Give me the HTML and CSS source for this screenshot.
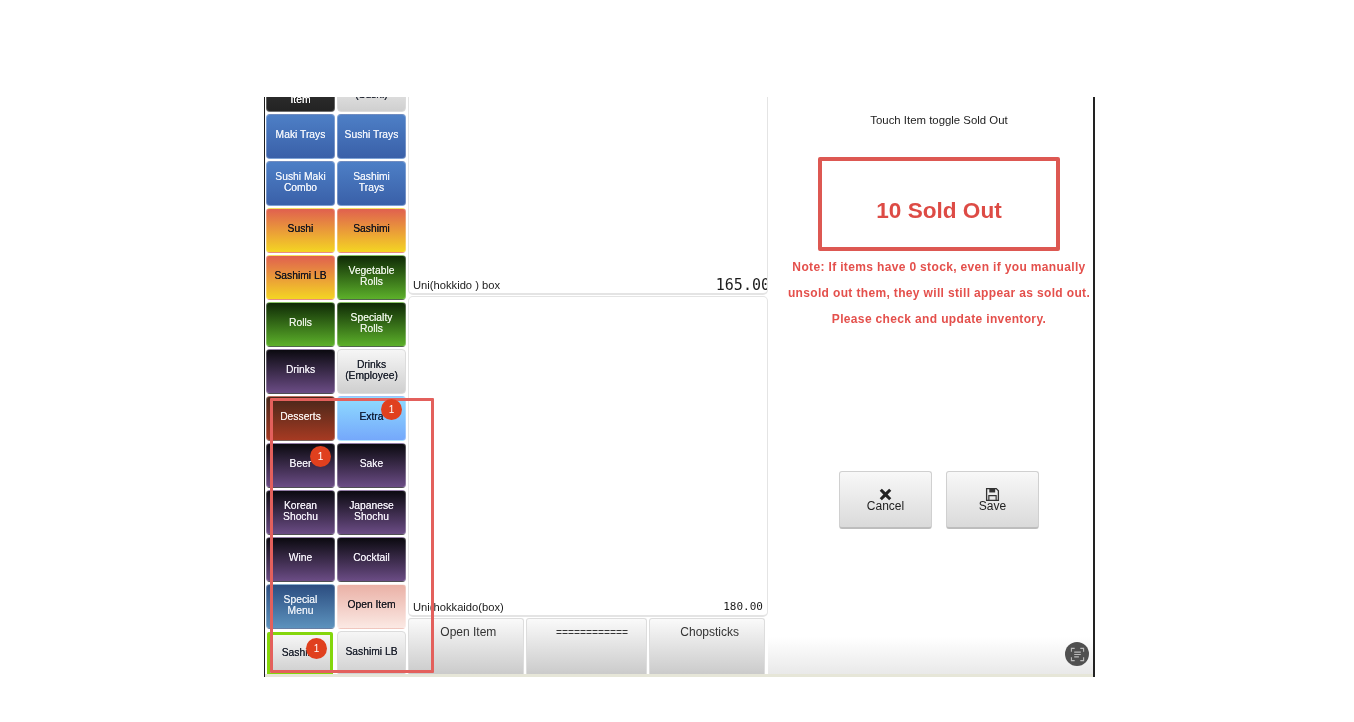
FILE: index.html
```html
<!DOCTYPE html>
<html lang="en">
<head>
<meta charset="utf-8">
<title>Sold Out</title>
<link rel="stylesheet" href="styles.css">
</head>
<body>
<div class="frame">
  <div class="screen">
    <nav class="menu">
      <div class="tile dark-grey">Item</div><div class="tile light cut">(Sushi)</div>
      <div class="tile blue">Maki Trays</div><div class="tile blue">Sushi Trays</div>
      <div class="tile blue">Sushi Maki<br>Combo</div><div class="tile blue">Sashimi<br>Trays</div>
      <div class="tile sunset">Sushi</div><div class="tile sunset">Sashimi</div>
      <div class="tile sunset">Sashimi LB</div><div class="tile green">Vegetable<br>Rolls</div>
      <div class="tile green">Rolls</div><div class="tile green">Specialty<br>Rolls</div>
      <div class="tile purple">Drinks</div><div class="tile light">Drinks<br>(Employee)</div>
      <div class="tile maroon">Desserts</div><div class="tile sky">Extra</div>
      <div class="tile purple">Beer</div><div class="tile purple">Sake</div>
      <div class="tile purple">Korean<br>Shochu</div><div class="tile purple">Japanese<br>Shochu</div>
      <div class="tile purple">Wine</div><div class="tile purple">Cocktail</div>
      <div class="tile navy">Special<br>Menu</div><div class="tile pink">Open Item</div>
      <div class="tile light selected">Sashimi</div><div class="tile light">Sashimi LB</div>
    </nav>
    <main class="items">
      <div class="card card-top"><span>Uni(hokkido ) box</span><span class="price price-big">165.00</span></div>
      <div class="card card-main"><span>Uni(hokkaido(box)</span><span class="price">180.00</span></div>
      <div class="shortcuts">
        <div class="shortcut">Open Item</div>
        <div class="shortcut shortcut-rule">============</div>
        <div class="shortcut">Chopsticks</div>
      </div>
    </main>
    <aside class="panel">
      <p class="hint">Touch Item toggle Sold Out</p>
      <div class="count">10 Sold Out</div>
      <p class="note">Note: If items have 0 stock, even if you manually<br>unsold out them, they will still appear as sold out.<br>Please check and update inventory.</p>
      <div class="actions">
        <button class="action" type="button">
          <svg class="action-icon" viewBox="0 0 14 14"><path d="M3.6 1.6 7 5l3.4-3.4 2 2L9 7l3.4 3.4-2 2L7 9l-3.4 3.4-2-2L5 7 1.6 3.6z" fill="#222"/></svg>
          Cancel
        </button>
        <button class="action" type="button">
          <svg class="action-icon" viewBox="0 0 14 14"><path d="M1.5 1.5h9l2 2v9h-11z" fill="none" stroke="#333" stroke-width="1.2"/><path d="M4 1.5h5.5v3.6H4z" fill="#333"/><path d="M3.6 12.5V8h6.8v4.5" fill="none" stroke="#333" stroke-width="1.1"/></svg>
          Save
        </button>
      </div>
    </aside>
    <div class="strip"></div>
    <div class="scan">
      <svg viewBox="0 0 16 16" class="scan-icon"><path d="M1.5 5V1.5H5M11 1.5h3.5V5M14.5 11v3.5H11M5 14.5H1.5V11" fill="none" stroke="#bbb" stroke-width="1.2"/><path d="M4.5 5.5h7M4.5 8h7M4.5 10.5h5" fill="none" stroke="#bbb" stroke-width="1.2"/></svg>
    </div>
  </div>
  <div class="annotation"></div>
  <span class="badge badge-extra">1</span>
  <span class="badge badge-beer">1</span>
  <span class="badge badge-sashimi">1</span>
</div>
</body>
</html>
```
FILE: styles.css
```css
* { box-sizing: border-box; }
html, body { margin: 0; background: #fff; }
body {
  height: 722px;
  padding: 97px 0 0 264px;
  overflow: hidden;
  font-family: "Liberation Sans", Arial, sans-serif;
}
.frame {
  position: relative;
  width: 831px;
  height: 580px;
  filter: blur(0.55px);
}
.screen {
  position: relative;
  display: flex;
  width: 100%;
  height: 100%;
  overflow: hidden;
  background: #fff;
  border-left: 1px solid #1c1c1c;
  border-right: 2px solid #222;
}

/* left category menu */
.menu {
  flex: none;
  width: 142px;
  height: 580px;
  margin-left: 1px;
  display: grid;
  grid-template-columns: 69px 69px;
  grid-auto-rows: 45px;
  column-gap: 2px;
  row-gap: 2px;
  align-content: end;
  padding-bottom: 1px;
  overflow: hidden;
}
.tile {
  display: flex;
  align-items: center;
  justify-content: center;
  padding-bottom: 2px;
  text-align: center;
  font-size: 10.3px;
  line-height: 10.5px;
  color: #fff;
  border-radius: 4px;
  border: 1px solid rgba(255, 255, 255, .28);
  text-shadow: 0 0 .6px currentColor;
}
.dark-grey { background: linear-gradient(#3a3a3a, #232323); align-items: flex-end; padding-bottom: 6px; }
.cut { align-items: flex-end; padding-bottom: 11px; }
.blue { background: linear-gradient(#4d7fc6, #3a60a8); color: #eef2fa; }
.sunset { background: linear-gradient(#e0604f, #f4d523); color: #14141f; }
.green { background: linear-gradient(#0f2a06, #5cb02a); color: #e8f0e2; }
.purple { background: linear-gradient(#0b0a10, #6b4c85); color: #f0edf5; }
.maroon { background: linear-gradient(#47271a, #a63a22); color: #f5eeea; }
.sky { background: linear-gradient(#8fdcff, #75a8fb); color: #12203a; }
.navy { background: linear-gradient(#2c4d80, #5c92bd); color: #e8eef6; }
.pink { background: linear-gradient(#eab1a6, #fbe9e4); color: #1d1d25; }
.light { background: linear-gradient(#f6f6f6, #cfcfcf); color: #1f2430; border-color: #dcdcdc; }
.selected { margin: 1px 2px 0 1px; border: 3px solid #84d60c; border-radius: 2px; }

/* centre items */
.items {
  flex: none;
  width: 360px;
  height: 580px;
  display: flex;
  flex-direction: column;
}
.card {
  display: flex;
  justify-content: space-between;
  align-items: flex-end;
  padding: 0 4px 1px;
  font-size: 11.2px;
  color: #1c1c1c;
  line-height: 14px;
  background: #fff;
  border: 2px solid #e4e4e4;
  border-width: 1px 1px 2px;
  border-radius: 5px;
  overflow: hidden;
  white-space: nowrap;
}
.card-top { height: 198px; border-top: 0; border-radius: 0 0 5px 5px; padding-right: 0; }
.card-main { height: 321px; margin-top: 1px; }
.price { font-family: "DejaVu Sans Mono", monospace; font-size: 11px; }
.price-big { font-size: 15px; line-height: 14px; margin-right: -3px; }
.shortcuts {
  display: flex;
  gap: 2px;
  width: 357px;
  height: 58px;
  margin-top: 1px;
}
.shortcut {
  flex: 1;
  padding: 6px 0 0 5px;
  text-align: center;
  font-size: 12px;
  line-height: 14px;
  color: #333;
  background: linear-gradient(#fafafa, #c9c9c9);
  border: 1px solid #ddd;
  border-bottom: 0;
  border-radius: 3px 3px 0 0;
}
.shortcut-rule { padding: 7px 0 0 11px; font-size: 10.3px; }

/* right panel */
.panel {
  flex: 1;
  min-width: 0;
  height: 577px;
  padding: 16px 0 0 17px;
  display: flex;
  flex-direction: column;
  align-items: center;
  background: linear-gradient(#fff 540px, #e9e9e9);
  white-space: nowrap;
}
.hint {
  margin: 0;
  font-size: 11.4px;
  line-height: 14px;
  color: #222;
}
.count {
  width: 242px;
  height: 94px;
  margin-top: 30px;
  padding-top: 14px;
  display: flex;
  align-items: center;
  justify-content: center;
  font-size: 22.6px;
  font-weight: 700;
  color: #dd4b45;
  border: 4px solid #dd5852;
  border-radius: 2px;
}
.note {
  margin: 3px 0 0;
  font-size: 12px;
  letter-spacing: .35px;
  font-weight: 700;
  line-height: 26px;
  text-align: center;
  color: #e4504c;
}
.actions {
  display: flex;
  gap: 14px;
  margin-top: 139px;
}
.action {
  width: 93px;
  height: 58px;
  padding: 15px 0 0;
  display: flex;
  flex-direction: column;
  align-items: center;
  font: 12px/12px "Liberation Sans", Arial, sans-serif;
  color: #222;
  background: linear-gradient(#f8f8f8, #dadada);
  border: 1px solid #d0d0d0;
  border-bottom: 2px solid #bdbdbd;
  border-radius: 3px;
}
.action-icon { width: 15px; height: 15px; margin-bottom: -2px; }

/* overlays */
.strip {
  position: absolute;
  left: 0;
  right: 0;
  bottom: 0;
  height: 3px;
  background: #e6e6d8;
}
.scan {
  position: absolute;
  left: 800px;
  top: 545px;
  width: 24px;
  height: 24px;
  display: flex;
  align-items: center;
  justify-content: center;
  border-radius: 50%;
  background: #505050;
}
.scan-icon { width: 15px; height: 15px; }
.annotation {
  position: absolute;
  left: 6px;
  top: 301px;
  width: 164px;
  height: 275px;
  border: 3px solid #e3605c;
  border-radius: 1px;
}
.badge {
  position: absolute;
  width: 21px;
  height: 21px;
  display: flex;
  align-items: center;
  justify-content: center;
  font-size: 10px;
  color: #fff;
  background: #e0401e;
  border-radius: 50%;
}
.badge-extra { left: 117px; top: 302px; }
.badge-beer { left: 46px; top: 349px; }
.badge-sashimi { left: 42px; top: 541px; }
```
